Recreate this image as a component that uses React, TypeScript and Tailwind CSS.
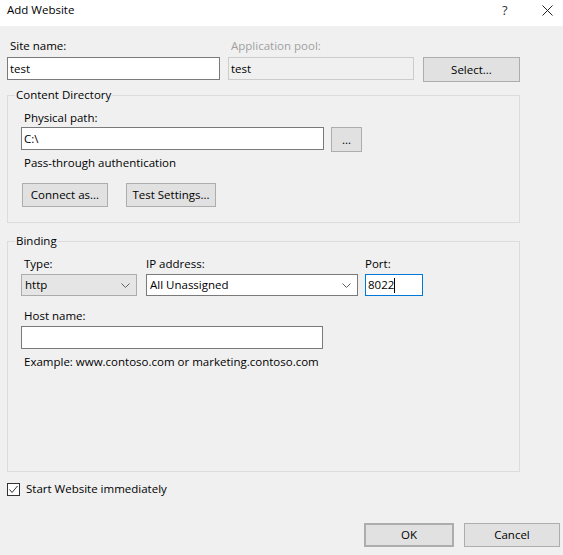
const Chevron = () => (
  <svg width="9" height="5" viewBox="0 0 9 5" className="shrink-0">
    <path d="M0.5 0.5 L4.5 4.5 L8.5 0.5" fill="none" stroke="#606060" strokeWidth="1" />
  </svg>
);

const Button = ({ label, className = "" }: { label: string; className?: string }) => (
  <button
    className={`h-[24px] bg-[#e1e1e1] border border-[#adadad] flex items-center justify-center shrink-0 ${className}`}
  >
    {label}
  </button>
);

export default function App() {
  return (
    <div className="w-[563px] h-[555px] bg-[#f0f0f0] text-[11.5px] leading-[16px] text-black font-['Open_Sans',sans-serif] flex flex-col overflow-hidden">
      {/* title bar */}
      <div className="h-[26px] bg-white flex items-center pl-[7px] pb-[6px] shrink-0">
        <span className="flex-1 text-[11.5px]">Add Website</span>
        <span className="w-[14px] text-[13px] text-[#333]">?</span>
        <svg width="11" height="11" viewBox="0 0 11 11" className="ml-[26px] mr-[10px]">
          <path d="M0.5 0.5 L10.5 10.5 M10.5 0.5 L0.5 10.5" stroke="#222" strokeWidth="1" />
        </svg>
      </div>

      <div className="flex flex-col px-[7px] pt-[12px]">
        {/* site name / app pool */}
        <div className="flex items-start">
          <div className="w-[213px] flex flex-col">
            <span className="pl-[3px]">Site name:</span>
            <div className="mt-[3px] h-[23px] bg-white border border-[#7a7a7a] pl-[2px] flex items-center">test</div>
          </div>
          <div className="ml-[8px] w-[186px] flex flex-col">
            <span className="pl-[3px] text-[#a0a0a0]">Application pool:</span>
            <div className="mt-[3px] h-[23px] bg-[#f0f0f0] border border-[#cccccc] pl-[2px] flex items-center">test</div>
          </div>
          <Button label="Select..." className="ml-[9px] mt-[19px] w-[97px] h-[25px]" />
        </div>

        {/* content directory */}
        <fieldset className="mt-[5px] w-[513px] border border-[#dcdcdc] p-0">
          <legend className="ml-[7px] px-[1px]">Content Directory</legend>
          <div className="flex flex-col px-[13px] pt-[7px] pb-[15px]">
            <span className="pl-[3px]">Physical path:</span>
            <div className="mt-[1px] flex items-start">
              <div className="w-[303px] h-[23px] bg-white border border-[#7a7a7a] pl-[2px] flex items-center">C:\</div>
              <Button label="..." className="ml-[7px] w-[31px] h-[25px]" />
            </div>
            <span className="pl-[3px] mt-[3px]">Pass-through authentication</span>
            <div className="mt-[12px] flex">
              <Button label="Connect as..." className="ml-[1px] w-[86px]" />
              <Button label="Test Settings..." className="ml-[18px] w-[90px]" />
            </div>
          </div>
        </fieldset>

        {/* binding */}
        <fieldset className="mt-[10px] w-[513px] h-[239px] border border-[#dcdcdc] p-0">
          <legend className="ml-[7px] px-[1px]">Binding</legend>
          <div className="flex flex-col px-[13px] pt-[7px]">
            <div className="flex items-start">
              <div className="w-[116px] flex flex-col">
                <span className="pl-[3px]">Type:</span>
                <div className="mt-[2px] h-[22px] bg-[#e5e5e5] border border-[#acacac] pl-[3px] pr-[6px] flex items-center justify-between">
                  <span>http</span>
                  <Chevron />
                </div>
              </div>
              <div className="ml-[9px] w-[212px] flex flex-col">
                <span>IP address:</span>
                <div className="mt-[2px] h-[22px] bg-white border border-[#7a7a7a] pl-[3px] pr-[6px] flex items-center justify-between">
                  <span>All Unassigned</span>
                  <Chevron />
                </div>
              </div>
              <div className="ml-[7px] w-[58px] flex flex-col">
                <span>Port:</span>
                <div className="mt-[2px] h-[22px] bg-white border border-[#0078d7] pl-[2px] flex items-center">
                  <span>8022</span>
                  <span className="w-[1px] h-[15px] bg-black" />
                </div>
              </div>
            </div>
            <span className="pl-[3px] mt-[12px]">Host name:</span>
            <div className="mt-[2px] w-[302px] h-[23px] bg-white border border-[#7a7a7a]" />
            <span className="pl-[3px] mt-[5px]">Example: www.contoso.com or marketing.contoso.com</span>
          </div>
        </fieldset>

        {/* start checkbox */}
        <div className="mt-[9px] flex items-center h-[16px]">
          <div className="w-[13px] h-[13px] border border-[#333] bg-white flex items-center justify-center">
            <svg width="11" height="11" viewBox="0 0 11 11">
              <path d="M1.5 5.5 L4 8.5 L9.5 2" fill="none" stroke="#333" strokeWidth="1" />
            </svg>
          </div>
          <span className="ml-[6px]">Start Website immediately</span>
        </div>

        {/* dialog buttons */}
        <div className="mt-[26px] ml-[357px] flex">
          <Button label="OK" className="w-[90px] border-2 border-[#0078d7]" />
          <Button label="Cancel" className="ml-[10px] w-[96px]" />
        </div>
      </div>
    </div>
  );
}
